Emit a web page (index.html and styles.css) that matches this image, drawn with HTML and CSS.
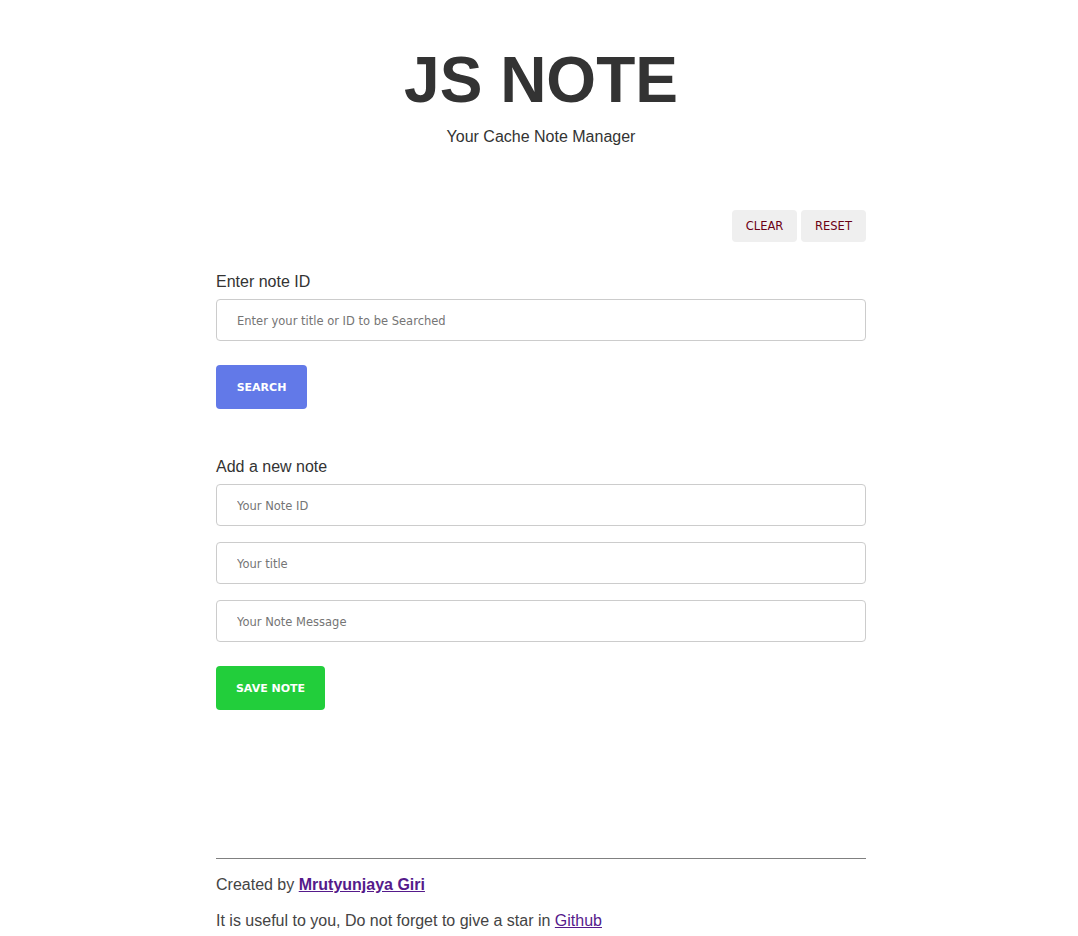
FILE: index.html
```html
<!DOCTYPE html>
<html>
<head>
<meta charset="utf-8">
<title>JS NOTE</title>
<link rel="stylesheet" href="styles.css">
</head>
<body>
<header class="header">
  <h1 class="title">JS NOTE</h1>
  <p class="subtitle">Your Cache Note Manager</p>
</header>
<main class="container">
  <div class="toolbar">
    <button class="tool-btn">CLEAR</button>
    <button class="tool-btn">RESET</button>
  </div>
  <section class="group">
    <label class="label">Enter note ID</label>
    <input class="field" type="text" placeholder="Enter your title or ID to be Searched">
    <div><button class="action search">SEARCH</button></div>
  </section>
  <section class="group add">
    <label class="label">Add a new note</label>
    <input class="field" type="text" placeholder="Your Note ID">
    <input class="field" type="text" placeholder="Your title">
    <input class="field" type="text" placeholder="Your Note Message">
    <div><button class="action save">SAVE NOTE</button></div>
  </section>
  <footer class="footer">
    <p class="foot-line">Created by <a class="author" href="#">Mrutyunjaya Giri</a></p>
    <p class="foot-line">It is useful to you, Do not forget to give a star in <a class="gh" href="#">Github</a></p>
  </footer>
</main>
</body>
</html>
```
FILE: styles.css
```css
* { box-sizing: border-box; }
html, body { margin: 0; padding: 0; background: #fff; }
body {
  font-family: "Liberation Sans", Arial, sans-serif;
  color: #333;
  padding-left: 4px;
}
.header { text-align: center; }
.title {
  margin: 43px 0 0;
  font-size: 64px;
  line-height: 74px;
  font-weight: bold;
  color: #333;
}
.subtitle {
  margin: 11px 0 0;
  font-size: 16px;
  line-height: 18px;
  color: #333;
}
.container {
  width: 650px;
  margin: 0 auto;
}
.toolbar {
  display: flex;
  justify-content: flex-end;
  gap: 4px;
  margin-top: 64px;
}
.tool-btn {
  width: 65px;
  height: 32px;
  border: none;
  border-radius: 4px;
  background: #efefef;
  color: #6b0014;
  font-family: "DejaVu Sans", Tahoma, sans-serif;
  font-size: 11.5px;
  padding: 0;
}
.group {
  display: flex;
  flex-direction: column;
  margin-top: 31px;
}
.group.add { margin-top: 49px; }
.label {
  font-size: 16px;
  line-height: 18px;
  color: #333;
  margin-bottom: 8px;
}
.field {
  width: 100%;
  height: 42px;
  border: 1px solid #ccc;
  border-radius: 4px;
  padding: 1px 20px 0;
  font-family: "DejaVu Sans", Tahoma, sans-serif;
  font-size: 11.5px;
  color: #333;
  margin-bottom: 16px;
}
.field::placeholder { color: #757575; }
.action {
  margin-top: 8px;
  height: 44px;
  border: none;
  border-radius: 4px;
  color: #fff;
  font-family: "DejaVu Sans", Tahoma, sans-serif;
  font-weight: bold;
  font-size: 11px;
  padding: 0;
  white-space: nowrap;
  text-align: center;
}
.search { background: #6279e8; width: 91px; }
.save { background: #22ce3b; width: 109px; }
.footer {
  margin-top: 148px;
  border-top: 1px solid #808080;
  padding-top: 16px;
}
.foot-line {
  margin: 0 0 16px;
  font-size: 16px;
  line-height: 20px;
  color: #444;
}
.author { color: #551a8b; font-weight: bold; }
.gh { color: #551a8b; }
```
